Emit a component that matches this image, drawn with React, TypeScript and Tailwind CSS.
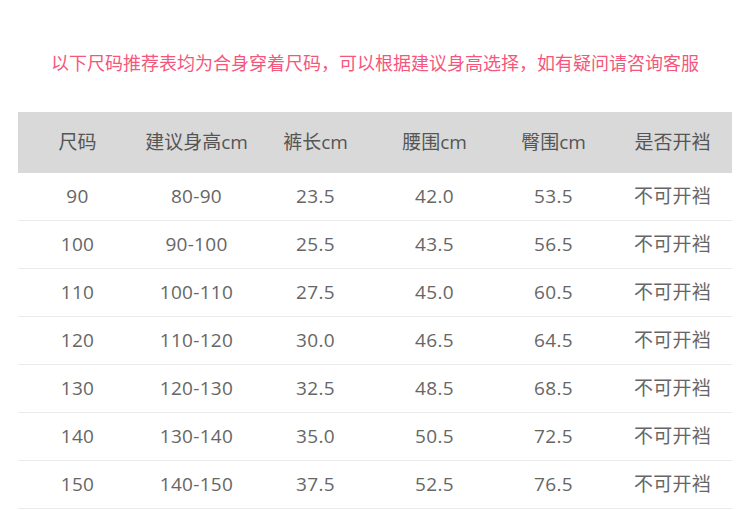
const headers = ["尺码", "建议身高cm", "裤长cm", "腰围cm", "臀围cm", "是否开裆"];

const rows = [
  ["90", "80-90", "23.5", "42.0", "53.5", "不可开裆"],
  ["100", "90-100", "25.5", "43.5", "56.5", "不可开裆"],
  ["110", "100-110", "27.5", "45.0", "60.5", "不可开裆"],
  ["120", "110-120", "30.0", "46.5", "64.5", "不可开裆"],
  ["130", "120-130", "32.5", "48.5", "68.5", "不可开裆"],
  ["140", "130-140", "35.0", "50.5", "72.5", "不可开裆"],
  ["150", "140-150", "37.5", "52.5", "76.5", "不可开裆"],
];

export default function App() {
  return (
    <div className="w-[750px] h-[510px] bg-white overflow-hidden font-['Open_Sans','Noto_Sans_CJK_SC',sans-serif]">
      <p className="pt-[49px] h-[112px] text-center text-[18px] leading-[28px] text-[#f5577c]">
        以下尺码推荐表均为合身穿着尺码，可以根据建议身高选择，如有疑问请咨询客服
      </p>

      <div className="mx-[18px] w-[714px]">
        <div className="grid grid-cols-6 h-[61px] items-center bg-[#d9d9d9] text-[19px] text-[#555]">
          {headers.map((h) => (
            <div key={h} className="text-center">
              {h}
            </div>
          ))}
        </div>
        {rows.map((r) => (
          <div
            key={r[0]}
            className="grid grid-cols-6 h-[48px] items-center border-b border-[#ebebeb] text-[19px] text-[#666]"
          >
            {r.map((c, i) => (
              <div key={i} className="text-center tracking-[0.3px]">
                {c}
              </div>
            ))}
          </div>
        ))}
      </div>
    </div>
  );
}
